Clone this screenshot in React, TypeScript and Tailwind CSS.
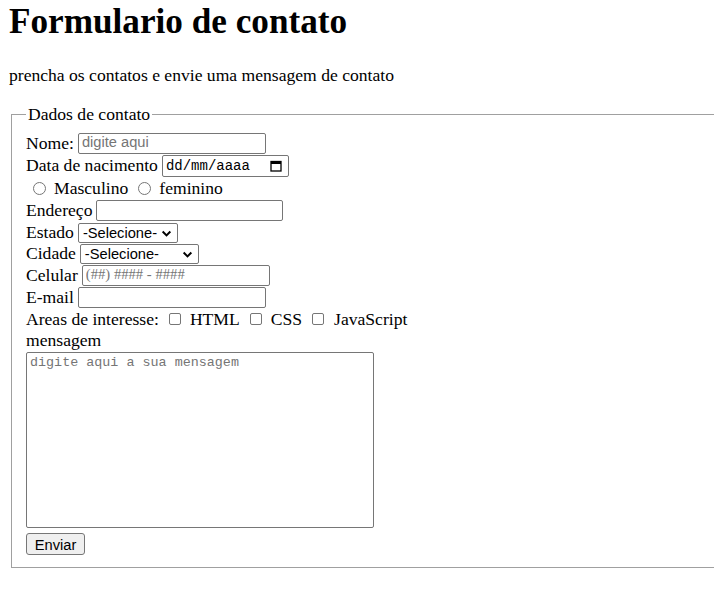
import React from "react";

const serif = "font-['Liberation_Serif','Times_New_Roman',serif] text-[17.6px]";
const ctrlFont = "font-['Liberation_Sans',Arial,sans-serif] text-[14.67px]";

const inputCls = `${ctrlFont} h-[21px] border border-[#767676] rounded-[2px] px-[3px] bg-white text-black placeholder:text-[#757575] outline-none`;

const Chevron = () => (
  <svg width="11" height="11" viewBox="0 0 10 10" className="absolute right-[5px] top-[4px]">
    <path d="M1.5 3.2 L5 6.7 L8.5 3.2" fill="none" stroke="#000" strokeWidth="1.8" />
  </svg>
);

const Select = ({ w }: { w: string }) => (
  <div className={`relative h-[20px] ${w} border border-[#767676] rounded-[2px] bg-white ${ctrlFont} pl-[4px] leading-[18px] text-black`}>
    -Selecione-
    <Chevron />
  </div>
);

const Radio = () => (
  <span className="inline-block w-[13px] h-[13px] rounded-full border border-[#767676] bg-white" />
);

const Check = () => (
  <span className="inline-block w-[12px] h-[12px] rounded-[2px] border border-[#767676] bg-white" />
);

export default function App() {
  return (
    <div className={`${serif} text-black bg-white min-h-[589px] w-[714px] overflow-hidden pl-[9px]`}>
      <h1 className="text-[35.2px] font-bold leading-[40px] pt-[2px]">Formulario de contato</h1>
      <p className="mt-[23px] leading-[20px]">prencha os contatos e envie uma mensagem de contato</p>

      <fieldset className="mt-[19px] ml-[2px] w-[720px] border border-[#a0a0a0] pl-[14px] pt-[8px] pb-[10px]">
        <legend className="px-[2px] leading-[20px]">Dados de contato</legend>

        <div className="flex items-center h-[22px]">
          <span>Nome:</span>
          <input className={`${inputCls} ml-[4px] w-[188px]`} placeholder="digite aqui" />
        </div>

        <div className="flex items-center h-[23px]">
          <span>Data de nacimento</span>
          <div className="relative ml-[4px] w-[127px] h-[22px] border border-[#767676] rounded-[2px] bg-white font-['Liberation_Mono',monospace] text-[14px] leading-[20px] pl-[3px]">
            dd/mm/aaaa
            <svg width="12" height="12" viewBox="0 0 12 12" className="absolute right-[6px] top-[4px]">
              <rect x="1" y="1.5" width="10" height="9.5" fill="none" stroke="#000" strokeWidth="1.3" />
              <rect x="1" y="1.5" width="10" height="2.5" fill="#000" />
            </svg>
          </div>
        </div>

        <div className="flex items-center h-[22px]">
          <span className="ml-[7px] flex"><Radio /></span>
          <span className="ml-[8px]">Masculino</span>
          <span className="ml-[10px] flex"><Radio /></span>
          <span className="ml-[8px]">feminino</span>
        </div>

        <div className="flex items-center h-[23px]">
          <span>Endereço</span>
          <input className={`${inputCls} ml-[4px] w-[187px]`} />
        </div>

        <div className="flex items-center h-[21px]">
          <span>Estado</span>
          <div className="ml-[4px]"><Select w="w-[100px]" /></div>
        </div>

        <div className="flex items-center h-[21px]">
          <span>Cidade</span>
          <div className="ml-[4px]"><Select w="w-[119px]" /></div>
        </div>

        <div className="flex items-center h-[22px]">
          <span>Celular</span>
          <input className={`${inputCls} ml-[4px] w-[188px] font-['Liberation_Serif',serif]`} placeholder="(##) #### - ####" />
        </div>

        <div className="flex items-center h-[22px]">
          <span>E-mail</span>
          <input className={`${inputCls} ml-[4px] w-[188px]`} />
        </div>

        <div className="flex items-center h-[22px]">
          <span>Areas de interesse:</span>
          <span className="ml-[10px] flex"><Check /></span>
          <span className="ml-[9px]">HTML</span>
          <span className="ml-[10px] flex"><Check /></span>
          <span className="ml-[9px]">CSS</span>
          <span className="ml-[10px] flex"><Check /></span>
          <span className="ml-[10px]">JavaScript</span>
        </div>

        <div className="h-[21px] leading-[21px]">mensagem</div>

        <textarea
          className="block mt-[1px] w-[348px] h-[176px] border border-[#767676] rounded-[2px] px-[3px] py-[2px] font-['Liberation_Mono',monospace] text-[13.4px] leading-[16px] placeholder:text-[#757575] resize-none outline-none"
          placeholder="digite aqui a sua mensagem"
        />

        <button className={`${ctrlFont} mt-[5px] h-[22px] w-[59px] bg-[#efefef] border border-[#767676] rounded-[3px] text-black`}>
          Enviar
        </button>
      </fieldset>
    </div>
  );
}
